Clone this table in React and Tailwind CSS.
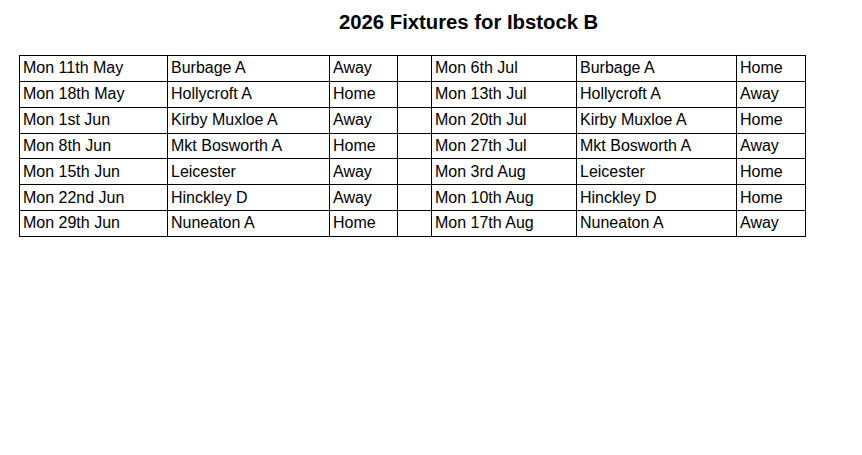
const rows = [
  ['Mon 11th May', 'Burbage A', 'Away', 'Mon 6th Jul', 'Burbage A', 'Home'],
  ['Mon 18th May', 'Hollycroft A', 'Home', 'Mon 13th Jul', 'Hollycroft A', 'Away'],
  ['Mon 1st Jun', 'Kirby Muxloe A', 'Away', 'Mon 20th Jul', 'Kirby Muxloe A', 'Home'],
  ['Mon 8th Jun', 'Mkt Bosworth A', 'Home', 'Mon 27th Jul', 'Mkt Bosworth A', 'Away'],
  ['Mon 15th Jun', 'Leicester', 'Away', 'Mon 3rd Aug', 'Leicester', 'Home'],
  ['Mon 22nd Jun', 'Hinckley D', 'Away', 'Mon 10th Aug', 'Hinckley D', 'Home'],
  ['Mon 29th Jun', 'Nuneaton A', 'Home', 'Mon 17th Aug', 'Nuneaton A', 'Away'],
]

const widths = ['w-[148px]', 'w-[162px]', 'w-[68px]', 'w-[34px]', 'w-[145px]', 'w-[160px]', 'w-[69px]']

export default function App() {
  return (
    <div className="w-[862px] h-[455px] bg-white text-black font-['Liberation_Sans',Arial,sans-serif]">
      <h1 className="pt-[10px] pl-[339px] text-[20.3px] leading-[24px] font-bold">2026 Fixtures for Ibstock B</h1>
      <table className="mt-[21px] ml-[19px] border-collapse table-fixed text-[16px] leading-[18px]">
        <colgroup>
          {widths.map((w, i) => <col key={i} className={w} />)}
        </colgroup>
        <tbody>
          {rows.map((r, i) => (
            <tr key={i} className="h-[25.85px]">
              <td className="border border-black pl-[3px] py-0">{r[0]}</td>
              <td className="border border-black pl-[3px] py-0">{r[1]}</td>
              <td className="border border-black pl-[3px] py-0">{r[2]}</td>
              <td className="border border-black"></td>
              <td className="border border-black pl-[3px] py-0">{r[3]}</td>
              <td className="border border-black pl-[3px] py-0">{r[4]}</td>
              <td className="border border-black pl-[3px] py-0">{r[5]}</td>
            </tr>
          ))}
        </tbody>
      </table>
    </div>
  )
}
